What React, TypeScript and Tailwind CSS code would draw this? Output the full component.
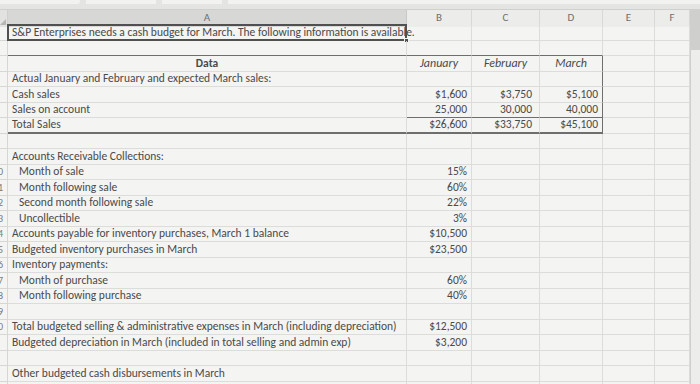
import React from "react";

type Row = {
  a?: string;
  indent?: boolean;
  b?: string;
  c?: string;
  d?: string;
};

const ROWS: Row[] = [
  { a: "S&P Enterprises needs a cash budget for March. The following information is available." },
  {},
  { a: "Data", b: "January", c: "February", d: "March" },
  { a: "Actual January and February and expected March sales:" },
  { a: "Cash sales", b: "$1,600", c: "$3,750", d: "$5,100" },
  { a: "Sales on account", b: "25,000", c: "30,000", d: "40,000" },
  { a: "Total Sales", b: "$26,600", c: "$33,750", d: "$45,100" },
  {},
  { a: "Accounts Receivable Collections:" },
  { a: "Month of sale", indent: true, b: "15%" },
  { a: "Month following sale", indent: true, b: "60%" },
  { a: "Second month following sale", indent: true, b: "22%" },
  { a: "Uncollectible", indent: true, b: "3%" },
  { a: "Accounts payable for inventory purchases, March 1 balance", b: "$10,500" },
  { a: "Budgeted inventory purchases in March", b: "$23,500" },
  { a: "Inventory payments:" },
  { a: "Month of purchase", indent: true, b: "60%" },
  { a: "Month following purchase", indent: true, b: "40%" },
  {},
  { a: "Total budgeted selling & administrative expenses in March (including depreciation)", b: "$12,500" },
  { a: "Budgeted depreciation in March (included in total selling and admin exp)", b: "$3,200" },
  {},
  { a: "Other budgeted cash disbursements in March" },
  {},
];

const GRID = "grid grid-cols-[8px_399px_65px_68px_63px_52px_35px]";
const CELL = "h-[15.5px] border-b border-r border-[#dcdcda] flex items-center whitespace-nowrap";

function SheetRow({ row, i }: { row: Row; i: number }) {
  const n = i + 1;
  const header = n === 3;
  // table frame lines
  const topLine = n === 2 ? "border-b-[#6e6e6e]" : "";
  const sumLine = n === 6 ? "border-b-[#6e6e6e]" : "";
  const totalLine = n === 7 ? "border-b-2 border-b-[#6e6e6e]" : "";
  const rightLine = n >= 3 && n <= 7 ? "border-r-[#6e6e6e]" : "";

  return (
    <div className={GRID}>
      {/* row numbers, mostly scrolled off the left edge */}
      <div className="h-[15.5px] border-r border-b border-[#d6d6d4] overflow-hidden flex items-center justify-end">
        <span className="text-[10px] text-[#7a7a7a] -translate-x-[4px]">
          {n >= 10 && n <= 20 ? n : ""}
        </span>
      </div>

      <div
        className={`
          ${CELL}
          relative
          ${topLine}
          ${totalLine}
          ${header ? "justify-center font-bold" : row.indent ? "pl-[11px]" : "pl-[4px]"}
        `}
      >
        {row.a}
        {n === 1 && (
          <>
            <div className="absolute -left-[1px] -top-[1px] -right-[1px] -bottom-[1px] border-2 border-[#505050]" />
            <div className="absolute -right-[3px] -bottom-[3px] w-[5px] h-[5px] bg-[#505050] border border-[#f4f4f2]" />
          </>
        )}
      </div>

      <div
        className={`
          ${CELL}
          ${topLine}
          ${sumLine}
          ${totalLine}
          ${header ? "justify-center italic text-[12px]" : "justify-end pr-[4px]"}
        `}
      >
        {row.b}
      </div>

      <div
        className={`
          ${CELL}
          ${topLine}
          ${sumLine}
          ${totalLine}
          ${header ? "justify-center italic text-[12px]" : "justify-end pr-[7px]"}
        `}
      >
        {row.c}
      </div>

      <div
        className={`
          ${CELL}
          ${topLine}
          ${sumLine}
          ${totalLine}
          ${rightLine}
          ${header ? "justify-center italic text-[12px]" : "justify-end pr-[4px]"}
        `}
      >
        {row.d}
      </div>

      <div className={CELL} />
      <div className={CELL} />
    </div>
  );
}

export default function App() {
  return (
    <div
      className="w-[700px] h-[384px] overflow-hidden bg-[#f4f4f2] text-[11.5px] text-[#4a4a4a]"
      style={{ fontFamily: "Carlito, Lato, 'Liberation Sans', sans-serif" }}
    >
      {/* formula bar edge */}
      <div className="h-[10px] flex items-start gap-[6px] bg-[#e4e4e2] border-b border-[#cfcfcd]">
        <div className="w-[80px] h-[4px] bg-[#f2f2f0] rounded-br-[3px]" />
        <div className="w-[70px] h-[4px] bg-[#f2f2f0]" />
        <div className="w-[60px] h-[4px] bg-[#f2f2f0]" />
        <div className="flex-1 h-[4px] bg-[#f2f2f0]" />
      </div>

      <div className="flex">
        <div className="w-[690px]">
          {/* column headers */}
          <div className={`${GRID} h-[15px] text-[11px] text-[#707070]`}>
            <div className="relative bg-[#e2e2e0] border-r border-[#cfcfcd]">
              <div className="absolute left-0 bottom-[2px] w-0 h-0 border-l-[6px] border-l-transparent border-b-[6px] border-b-[#b5b5b3]" />
            </div>
            <div className="bg-[#d7d7d5] border-r border-[#c8c8c6] flex items-center justify-center">A</div>
            <div className="bg-[#ececea] border-r border-[#d8d8d6] flex items-center justify-center">B</div>
            <div className="bg-[#ececea] border-r border-[#d8d8d6] flex items-center justify-center">C</div>
            <div className="bg-[#ececea] border-r border-[#d8d8d6] flex items-center justify-center">D</div>
            <div className="bg-[#ececea] border-r border-[#d8d8d6] flex items-center justify-center">E</div>
            <div className="bg-[#ececea] border-r border-[#d8d8d6] flex items-center justify-center">F</div>
          </div>

          {ROWS.map((row, i) => (
            <SheetRow key={i} row={row} i={i} />
          ))}
        </div>

        {/* right edge */}
        <div className="w-[10px] flex flex-col">
          <div className="h-[40px] bg-[#cfcfcd]" />
          <div className="flex-1 bg-[#ededeb] border-l border-[#cfcfcd]" />
          <div className="h-[8px] w-[6px] ml-[3px] mb-[2px] bg-[#7fb8c4] rounded-[2px]" />
        </div>
      </div>
    </div>
  );
}
